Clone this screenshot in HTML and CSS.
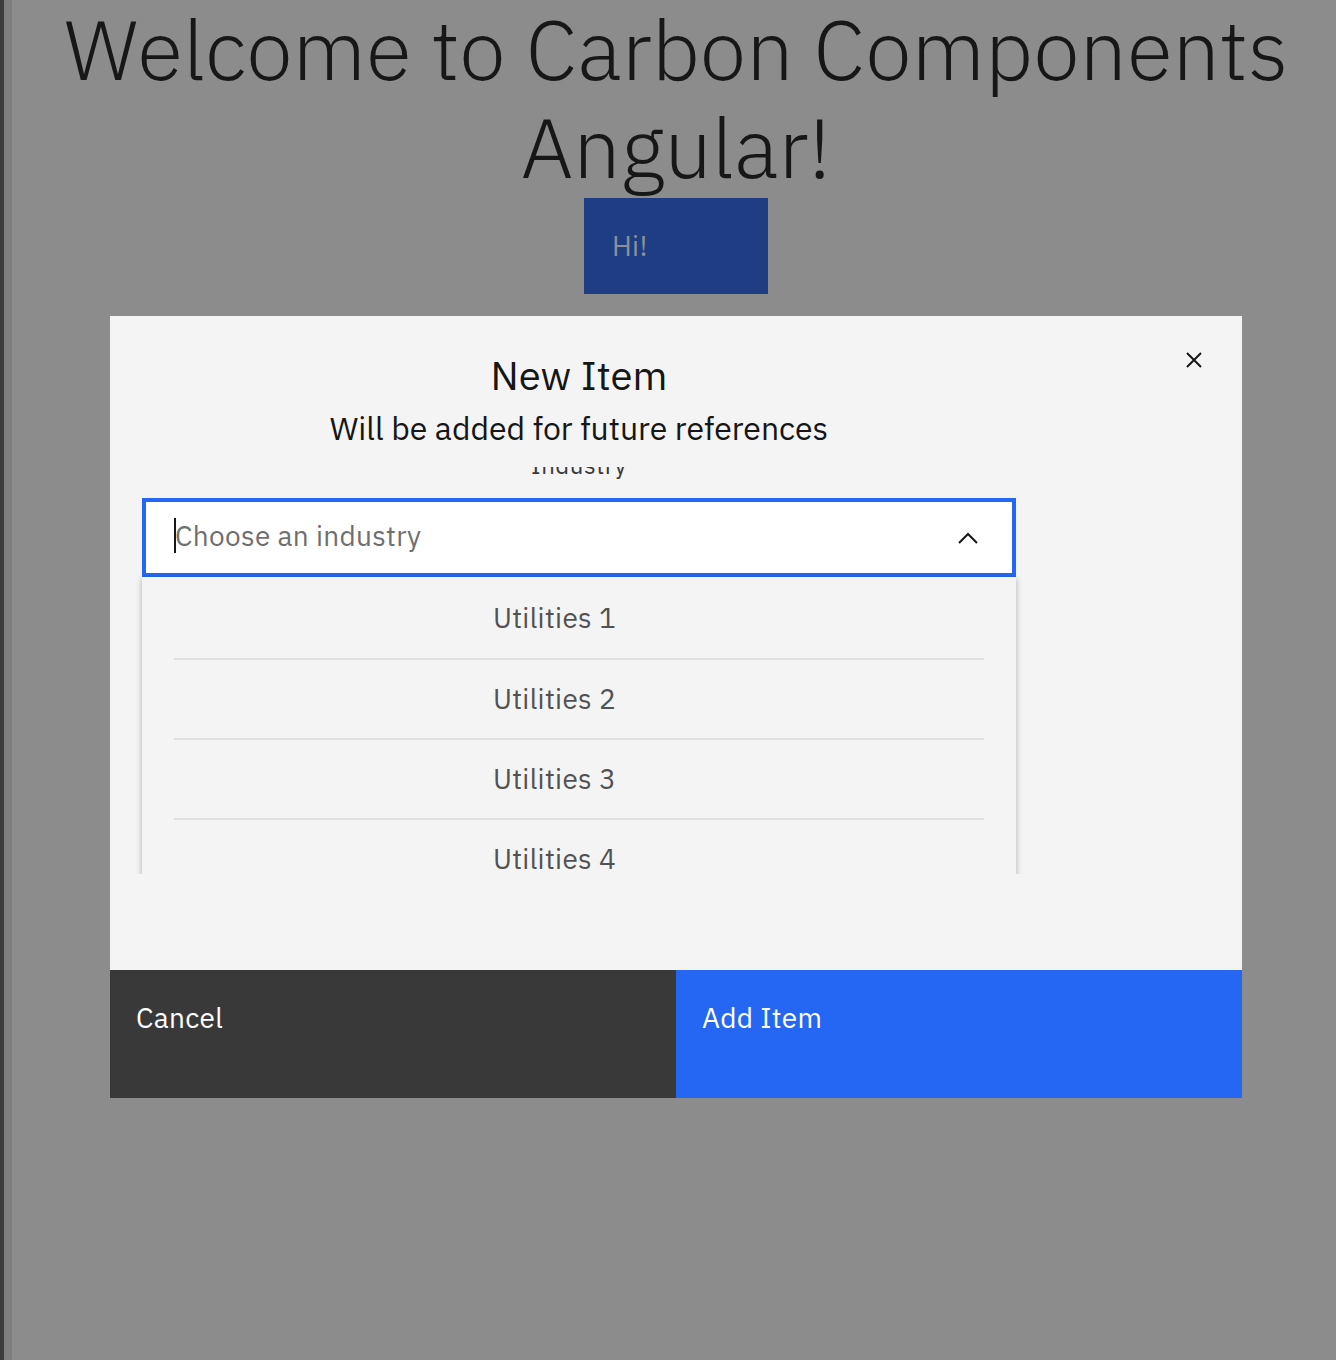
FILE: index.html
```html
<!DOCTYPE html>
<html lang="en">
<head>
<meta charset="utf-8">
<title>Carbon Components Angular</title>
<link rel="stylesheet" href="styles.css">
</head>
<body>
  <main class="page">
    <h1 class="hero">Welcome to Carbon Components<br>Angular!</h1>
    <button class="hi" type="button">Hi!</button>

    <section class="modal" role="dialog" aria-labelledby="modal-title">
      <header class="modal-header">
        <h2 class="modal-title" id="modal-title">New Item</h2>
        <p class="modal-sub">Will be added for future references</p>
        <button class="modal-close" type="button" aria-label="Close">
          <svg viewBox="0 0 16 16" width="16" height="16" aria-hidden="true">
            <path d="M1 1 L15 15 M15 1 L1 15" fill="none" stroke="#161616" stroke-width="2"/>
          </svg>
        </button>
      </header>

      <div class="modal-content">
        <div class="scroll-body">
          <label class="field-label">Industry</label>
          <div class="combo">
            <span class="combo-text"><span class="caret"></span>Choose an industry</span>
            <svg class="chevron" viewBox="0 0 20 12" width="20" height="12" aria-hidden="true">
              <polyline points="1,11 10,2 19,11" fill="none" stroke="#161616" stroke-width="2"/>
            </svg>
          </div>
          <ul class="menu">
            <li class="menu-item">Utilities 1</li>
            <li class="menu-item">Utilities 2</li>
            <li class="menu-item">Utilities 3</li>
            <li class="menu-item">Utilities 4</li>
          </ul>
        </div>
      </div>

      <footer class="modal-footer">
        <button class="btn btn-secondary" type="button">Cancel</button>
        <button class="btn btn-primary" type="button">Add Item</button>
      </footer>
    </section>
  </main>
</body>
</html>
```

FILE: styles.css
```css
* {
  box-sizing: border-box;
}

html {
  background: #8c8c8c;
}

body {
  margin: 0;
  min-height: 1360px;
  border-left: 4px solid #3c3c3c;
  padding-left: 12px;
  box-shadow: inset 8px 0 0 #7e7e7e;
  font-family: "IBM Plex Sans", Roboto, "Liberation Sans", sans-serif;
  color: #161616;
}

.page {
  text-align: center;
}

.hero {
  margin: 0;
  font-weight: 300;
  font-size: 84px;
  line-height: 98px;
  color: #171717;
}

.hi {
  display: flex;
  align-items: flex-start;
  width: 184px;
  height: 96px;
  margin: 2px auto 0;
  padding: 30px 0 0 28px;
  border: 0;
  background: #1e3d83;
  color: #8b909b;
  font-family: inherit;
  font-size: 28px;
  line-height: 36px;
  letter-spacing: 0.32px;
}

.modal {
  position: relative;
  width: 1132px;
  margin: 22px auto 0;
  background: #f4f4f4;
  text-align: center;
}

.modal-header {
  padding: 35px 226px 19px 32px;
}

.modal-title {
  margin: 0;
  font-weight: 400;
  font-size: 40px;
  line-height: 48px;
}

.modal-sub {
  margin: 9px 0 0;
  font-size: 32px;
  line-height: 40px;
}

.modal-close {
  position: absolute;
  top: 36px;
  right: 40px;
  width: 16px;
  height: 16px;
  padding: 0;
  border: 0;
  background: none;
  display: block;
}

.modal-close svg {
  display: block;
}

.modal-content {
  height: 407px;
  overflow: hidden;
  padding: 0 226px 0 32px;
}

.scroll-body {
  margin-top: -18px;
}

.field-label {
  display: block;
  font-size: 24px;
  line-height: 32px;
  letter-spacing: 0.5px;
  color: #393939;
}

.combo {
  display: flex;
  align-items: center;
  justify-content: space-between;
  height: 79px;
  margin-top: 17px;
  padding-left: 28px;
  border: 4px solid #2567f3;
  background: #ffffff;
}

.combo-text {
  display: flex;
  align-items: center;
  margin-bottom: 4px;
  font-size: 28px;
  line-height: 36px;
  letter-spacing: 0.32px;
  color: #6f6f6f;
}

.caret {
  display: inline-block;
  width: 2px;
  height: 35px;
  margin-right: -1px;
  background: #161616;
}

.chevron {
  display: block;
  margin-right: 34px;
}

.menu {
  list-style: none;
  margin: 0;
  padding: 1px 0 0;
  background: #f4f4f4;
  box-shadow: 0 2px 6px rgba(0, 0, 0, 0.3);
}

.menu-item {
  display: flex;
  align-items: center;
  justify-content: center;
  height: 80px;
  margin: 0 32px;
  padding-right: 49px;
  font-size: 28px;
  line-height: 36px;
  letter-spacing: 0.32px;
  color: #525252;
}

.menu-item + .menu-item {
  border-top: 2px solid #e0e0e0;
}

.modal-content + .modal-footer {
  margin-top: 96px;
}

.modal-footer {
  display: grid;
  grid-template-columns: 1fr 1fr;
  height: 128px;
}

.btn {
  display: flex;
  align-items: flex-start;
  padding: 30px 0 0 26px;
  border: 0;
  font-family: inherit;
  font-size: 28px;
  line-height: 36px;
  letter-spacing: 0.32px;
  color: #ffffff;
  text-align: left;
}

.btn-secondary {
  background: #393939;
}

.btn-primary {
  background: #2567f3;
}
```
